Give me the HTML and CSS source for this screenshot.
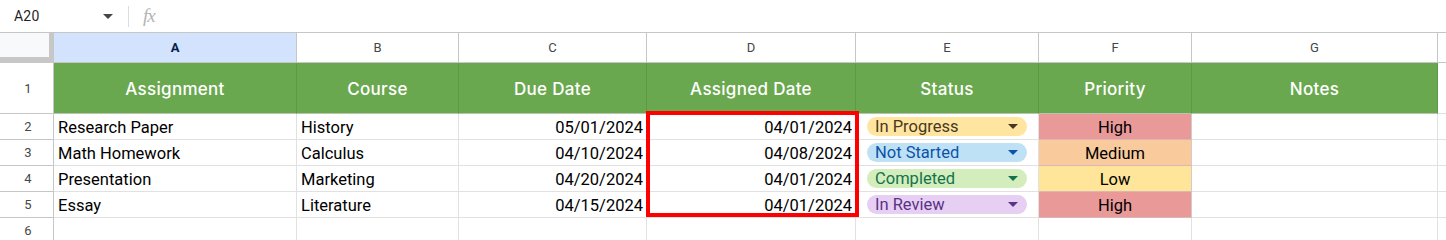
FILE: index.html
```html
<!DOCTYPE html>
<html>
<head>
<meta charset="utf-8">
<link rel="stylesheet" href="styles.css">
</head>
<body>
<div class="formula-bar">
  <div class="name-box">
    <span class="cell-ref">A20</span>
    <svg class="nb-arrow" width="10" height="5" viewBox="0 0 10 5"><path d="M0 0h10L5 5z" fill="#444746"/></svg>
  </div>
  <div class="fb-sep"></div>
  <span class="fx">fx</span>
</div>

<div class="sheet">
  <div class="corner"></div>
  <div class="colh sel">A</div>
  <div class="colh">B</div>
  <div class="colh">C</div>
  <div class="colh">D</div>
  <div class="colh">E</div>
  <div class="colh">F</div>
  <div class="colh">G</div>
  <div class="colh rest"></div>

  <div class="rowh tall">1</div>
  <div class="hd">Assignment</div>
  <div class="hd">Course</div>
  <div class="hd">Due Date</div>
  <div class="hd">Assigned Date</div>
  <div class="hd">Status</div>
  <div class="hd">Priority</div>
  <div class="hd">Notes</div>
  <div class="cell rest"></div>

  <div class="rowh">2</div>
  <div class="cell">Research Paper</div>
  <div class="cell">History</div>
  <div class="cell num">05/01/2024</div>
  <div class="cell num">04/01/2024</div>
  <div class="cell chipcell"><span class="chip prog">In Progress<svg width="10" height="5" viewBox="0 0 10 5"><path d="M0 0h10L5 5z"/></svg></span></div>
  <div class="cell pri high">High</div>
  <div class="cell"></div>
  <div class="cell rest"></div>

  <div class="rowh">3</div>
  <div class="cell">Math Homework</div>
  <div class="cell">Calculus</div>
  <div class="cell num">04/10/2024</div>
  <div class="cell num">04/08/2024</div>
  <div class="cell chipcell"><span class="chip notst">Not Started<svg width="10" height="5" viewBox="0 0 10 5"><path d="M0 0h10L5 5z"/></svg></span></div>
  <div class="cell pri med">Medium</div>
  <div class="cell"></div>
  <div class="cell rest"></div>

  <div class="rowh">4</div>
  <div class="cell">Presentation</div>
  <div class="cell">Marketing</div>
  <div class="cell num">04/20/2024</div>
  <div class="cell num">04/01/2024</div>
  <div class="cell chipcell"><span class="chip done">Completed<svg width="10" height="5" viewBox="0 0 10 5"><path d="M0 0h10L5 5z"/></svg></span></div>
  <div class="cell pri low">Low</div>
  <div class="cell"></div>
  <div class="cell rest"></div>

  <div class="rowh">5</div>
  <div class="cell">Essay</div>
  <div class="cell">Literature</div>
  <div class="cell num">04/15/2024</div>
  <div class="cell num">04/01/2024</div>
  <div class="cell chipcell"><span class="chip review">In Review<svg width="10" height="5" viewBox="0 0 10 5"><path d="M0 0h10L5 5z"/></svg></span></div>
  <div class="cell pri high">High</div>
  <div class="cell"></div>
  <div class="cell rest"></div>

  <div class="rowh">6</div>
  <div class="cell"></div>
  <div class="cell"></div>
  <div class="cell"></div>
  <div class="cell"></div>
  <div class="cell"></div>
  <div class="cell"></div>
  <div class="cell"></div>
  <div class="cell rest"></div>

  <div class="highlight-box"></div>
</div>
</body>
</html>
```

FILE: styles.css
```css
* { box-sizing: border-box; }
html, body { margin: 0; padding: 0; background: #fff; }
body {
  font-family: Roboto, "Liberation Sans", Arial, sans-serif;
  color: #000;
  width: 1446px;
  height: 240px;
  overflow: hidden;
}

.formula-bar {
  height: 33px;
  border-bottom: 1px solid #c4c7c5;
  display: flex;
  align-items: center;
}
.name-box {
  width: 128px;
  display: flex;
  align-items: center;
  padding-left: 14px;
  padding-right: 15px;
  justify-content: space-between;
}
.cell-ref { font-size: 14px; color: #1f1f1f; letter-spacing: 0.2px; }
.nb-arrow { display: block; }
.fb-sep { width: 1px; height: 21px; background: #dadce0; }
.fx {
  margin-left: 14px;
  font-family: "Liberation Serif", "Times New Roman", serif;
  font-style: italic;
  font-size: 19px;
  color: #b4b4b4;
  letter-spacing: -1px;
}

.sheet {
  position: relative;
  display: grid;
  grid-template-columns: 54px 243px 162px 188px 209px 183px 153px 246px 8px;
  grid-template-rows: 30px 51px 26px 26px 26px 26px 26px;
}

.corner {
  background: #f8f9fa;
  border-right: 5px solid #c7c7c7;
  border-bottom: 6px solid #c7c7c7;
}
.colh {
  border-right: 1px solid #c4c7c5;
  border-bottom: 1px solid #c4c7c5;
  display: flex;
  align-items: center;
  justify-content: center;
  font-size: 13px;
  color: #444746;
}
.colh.sel {
  background: #d3e3fd;
  color: #041e49;
  font-weight: 700;
}
.colh.rest { border-right: none; }

.rowh {
  border-right: 1px solid #c4c7c5;
  border-bottom: 1px solid #c4c7c5;
  display: flex;
  align-items: center;
  justify-content: center;
  font-size: 13px;
  color: #444746;
  padding-left: 3px;
}

.hd {
  background: #6aa84f;
  color: #fff;
  border-right: 1px solid #5e9946;
  border-bottom: 1px solid #b7c4b0;
  display: flex;
  align-items: center;
  justify-content: center;
  font-family: Inter, Lato, sans-serif;
  font-weight: 500;
  font-size: 17px;
  letter-spacing: 0.3px;
  padding-top: 2px;
}

.cell {
  border-right: 1px solid #e1e1e1;
  border-bottom: 1px solid #e1e1e1;
  display: flex;
  align-items: center;
  padding: 1px 4px 0;
  font-size: 16.5px;
  white-space: nowrap;
}
.cell.rest { border-right: none; }
.cell.num { justify-content: flex-end; padding-right: 3px; }

.chipcell { padding: 0 11px 0 11px; }
.chip {
  flex: 1;
  height: 19px;
  border-radius: 10px;
  display: flex;
  align-items: center;
  justify-content: space-between;
  padding: 0 9px 0 8px;
  font-size: 16.5px;
}
.chip svg { display: block; }
.chip.prog { background: #ffe5a0; color: #473821; }
.chip.prog svg path { fill: #473821; }
.chip.notst { background: #bfe1f6; color: #0a53a8; }
.chip.notst svg path { fill: #0a53a8; }
.chip.done { background: #d4edbc; color: #11734b; }
.chip.done svg path { fill: #11734b; }
.chip.review { background: #e6cff2; color: #5a3286; }
.chip.review svg path { fill: #5a3286; }

.pri { justify-content: center; border-right-color: #d6c9c9; border-bottom-color: #d9b7b7; }
.pri.high { background: #ea9999; }
.pri.med { background: #f9cb9c; }
.pri.low { background: #ffe599; }

.highlight-box {
  position: absolute;
  left: 646px;
  top: 78px;
  width: 213px;
  height: 106px;
  border: 4px solid #ff0000;
  pointer-events: none;
}
```
